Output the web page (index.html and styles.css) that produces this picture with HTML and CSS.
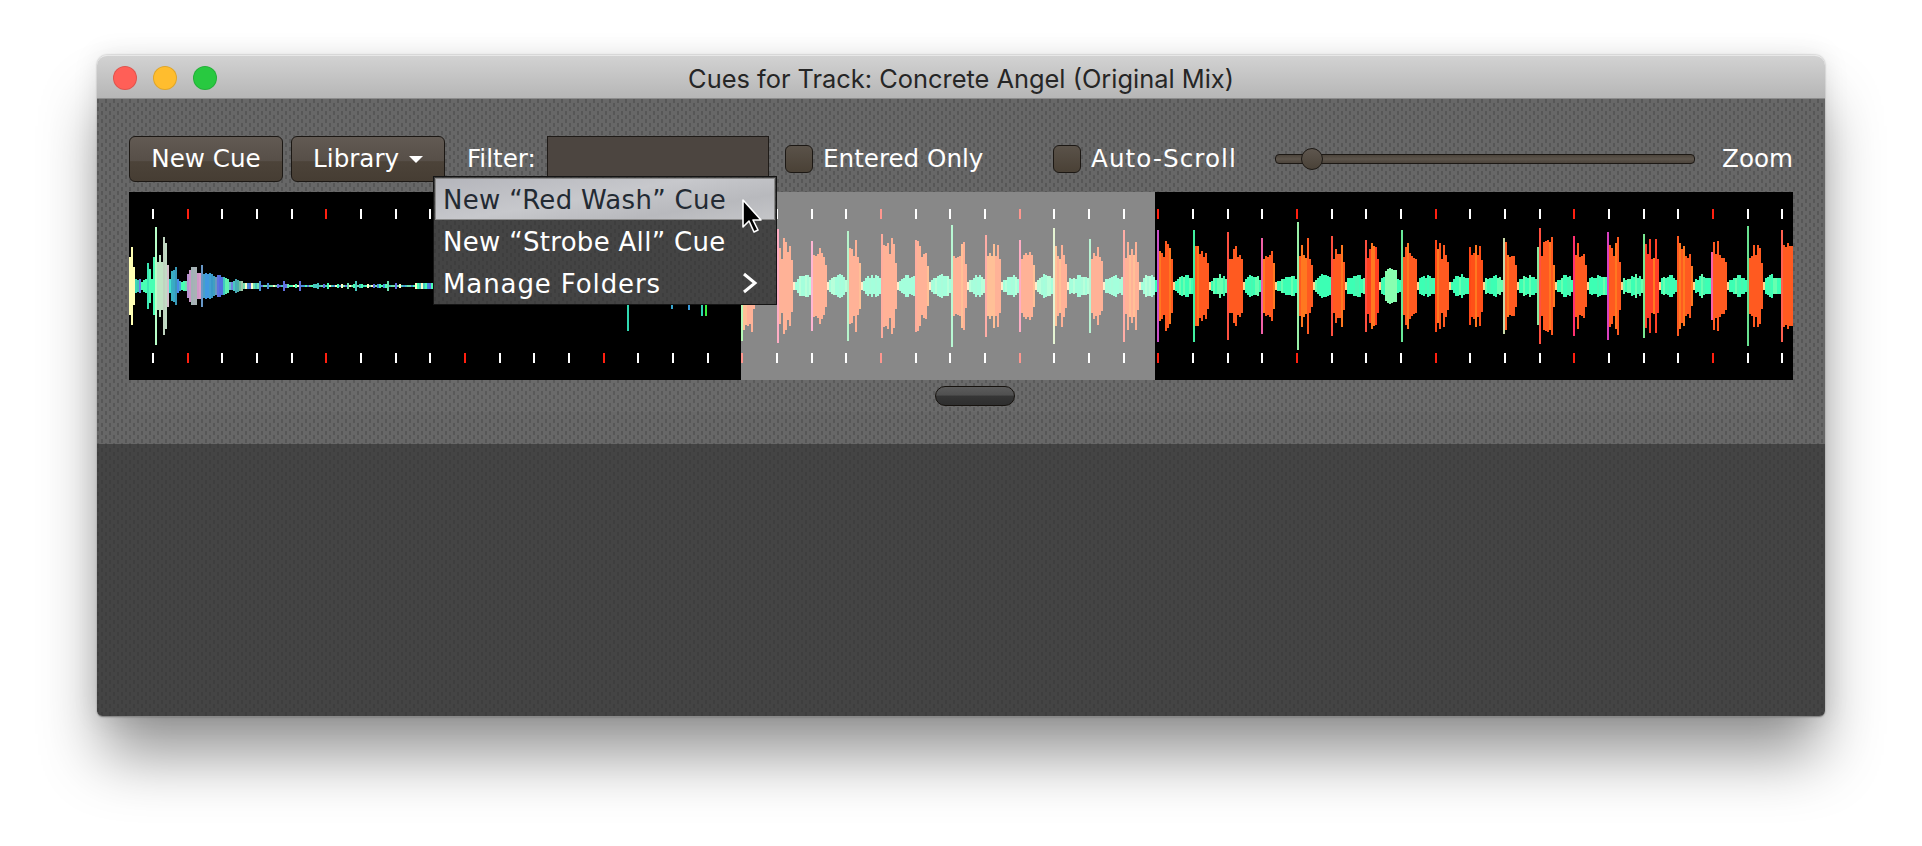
FILE: index.html
```html
<!doctype html>
<html lang="en">
  <head>
    <meta charset="UTF-8" />
    <meta name="viewport" content="width=device-width, initial-scale=1.0" />
    <title>Cues for Track: Concrete Angel (Original Mix)</title>
    <link rel="stylesheet" href="styles.css">
  </head>
  <body>
    <div class="window">
      <header class="titlebar">
        <div class="lights">
          <span class="light light-close"></span>
          <span class="light light-min"></span>
          <span class="light light-max"></span>
        </div>
        <h1 class="title">Cues for Track: Concrete Angel (Original Mix)</h1>
      </header>

      <section class="panel">
        <div class="toolbar">
          <button class="btn btn-new" type="button">New Cue</button>
          <button class="btn btn-library" type="button">Library <span class="caret"></span></button>
          <label class="filter-label" for="filter">Filter:</label>
          <input class="filter-input" id="filter" type="text" />
          <label class="check check-entered"><span class="box"></span>Entered Only</label>
          <label class="check check-scroll"><span class="box"></span>Auto-Scroll</label>
          <div class="slider"><span class="thumb"></span></div>
          <span class="zoom-label">Zoom</span>
        </div>

        <div class="wave">
          <canvas id="waveCanvas" width="1664" height="188"></canvas>
          <div class="selection"></div>
        </div>

        <div class="scroller"><span class="scroller-thumb"></span></div>

        <ul class="menu">
          <li class="menu-item menu-item-active">New “Red Wash” Cue</li>
          <li class="menu-item">New “Strobe All” Cue</li>
          <li class="menu-item menu-item-folders">
            Manage Folders
            <svg class="chevron" width="16" height="22" viewBox="0 0 16 22">
              <path d="M2 2 L13 11 L2 20" fill="none" stroke="#fff" stroke-width="3" />
            </svg>
          </li>
        </ul>

        <svg class="pointer" width="22" height="36" viewBox="0 0 22 36">
          <path d="M2 2 L2 29 L8 23 L13 34 L17 32 L12 22 L20 22 Z" fill="#000" stroke="#fff" stroke-width="1.6" stroke-linejoin="round" />
        </svg>
      </section>

      <section class="lower"></section>
    </div>
    <script src="waveform.js"></script>
  </body>
</html>
```

FILE: styles.css
```css
* {
  box-sizing: border-box;
}

html,
body {
  height: 100%;
}

body {
  margin: 0;
  padding: 55px 0 0 97px;
  background-color: #fff;
  font-family: "DejaVu Sans", sans-serif;
}

.window {
  width: 1728px;
  height: 662px;
  border-radius: 10px 10px 6px 6px;
  box-shadow: 0 44px 62px -6px rgba(0, 0, 0, 0.42), 0 0 26px rgba(0, 0, 0, 0.1), 0 0 2px rgba(0, 0, 0, 0.35);
  display: flex;
  flex-direction: column;
}

/* Title bar */
.titlebar {
  height: 44px;
  flex: none;
  display: flex;
  align-items: center;
  justify-content: center;
  position: relative;
  border-radius: 10px 10px 0 0;
  border-top: 1px solid #e8e8e8;
  border-bottom: 1px solid #8c8c8c;
  background: linear-gradient(#d2d2d2, #b6b6b6);
}

.lights {
  position: absolute;
  left: 16px;
  top: 10px;
  display: flex;
  gap: 16px;
}

.light {
  width: 24px;
  height: 24px;
  border-radius: 50%;
  border: 1px solid rgba(0, 0, 0, 0.12);
}

.light-close {
  background-color: #ff5f57;
}

.light-min {
  background-color: #ffbd2e;
}

.light-max {
  background-color: #28c940;
}

.title {
  margin: 2px 0 0;
  font-family: Inter, sans-serif;
  font-size: 25.4px;
  font-weight: 400;
  color: #262626;
}

/* Dotted panel */
.panel {
  height: 345px;
  flex: none;
  position: relative;
  padding: 37px 32px 0;
  background-color: #676767;
  background-image:
    conic-gradient(from 90deg at 2px 4px, transparent 50%, #575757 0 75%, transparent 0),
    conic-gradient(from 90deg at 2px 4px, transparent 50%, #575757 0 75%, transparent 0);
  background-size: 8px 8px;
  background-position: 0 0, 4px 4px;
}

.lower {
  flex: 1;
  border-radius: 0 0 6px 6px;
  border-bottom: 1px solid #888;
  background-color: #444;
  background-image:
    conic-gradient(from 90deg at 2px 4px, transparent 50%, #3e3e3e 0 75%, transparent 0),
    conic-gradient(from 90deg at 2px 4px, transparent 50%, #3e3e3e 0 75%, transparent 0);
  background-size: 8px 8px;
  background-position: 0 0, 4px 4px;
}

/* Toolbar */
.toolbar {
  height: 46px;
  display: flex;
  align-items: center;
  color: #fff;
  font-size: 24.6px;
}

.btn {
  width: 154px;
  height: 46px;
  padding: 0 0 2px;
  border: 1px solid #1c1814;
  border-radius: 6px;
  color: #fff;
  font-family: inherit;
  font-size: 24.6px;
  background: linear-gradient(#625a53, #574f48 54%, #4c4339 56%, #463d33);
}

.btn-library {
  margin-left: 8px;
}

.caret {
  display: inline-block;
  margin-left: 2px;
  vertical-align: middle;
  border-left: 7px solid transparent;
  border-right: 7px solid transparent;
  border-top: 7px solid #fff;
}

.filter-label {
  margin-left: 22px;
  width: 80px;
  flex: none;
  padding-bottom: 2px;
  white-space: nowrap;
}

.filter-input {
  width: 222px;
  height: 46px;
  flex: none;
  padding: 0;
  border: 1px solid #1f1b18;
  background-color: #4c4540;
}

.check {
  display: flex;
  align-items: center;
  gap: 10px;
  flex: none;
  padding-bottom: 2px;
  white-space: nowrap;
}

.check-entered {
  width: 198px;
  margin-left: 16px;
}

.check-scroll {
  width: 182px;
  margin-left: 70px;
  letter-spacing: 1.1px;
}

.box {
  width: 28px;
  height: 28px;
  flex: none;
  margin-top: 2px;
  border: 1px solid #1c1814;
  border-radius: 6px;
  background: linear-gradient(#5a5249, #4a4136);
}

.slider {
  width: 420px;
  height: 10px;
  flex: none;
  margin-left: 40px;
  position: relative;
  border: 1px solid #1c1814;
  border-radius: 4px;
  background: linear-gradient(#4c443b, #5d554c 50%, #4c443b);
}

.thumb {
  position: absolute;
  left: 25px;
  top: -7px;
  width: 22px;
  height: 22px;
  border: 1px solid #1c1814;
  border-radius: 50%;
  background: linear-gradient(#5e564e, #4a4238);
}

.zoom-label {
  margin-left: auto;
  padding-bottom: 2px;
}

/* Waveform */
.wave {
  margin-top: 10px;
  height: 188px;
  position: relative;
  background-color: #000;
}

.wave canvas {
  display: block;
}

.selection {
  position: absolute;
  left: 612px;
  top: 0;
  width: 414px;
  height: 188px;
  background-color: rgba(255, 255, 255, 0.533);
}

.scroller {
  height: 32px;
  display: flex;
  padding: 6px 0 0 806px;
  background-color: rgba(255, 255, 255, 0.025);
}

.scroller-thumb {
  width: 80px;
  height: 20px;
  border: 1px solid #17130f;
  border-radius: 10px;
  background: linear-gradient(#5c5c5c, #505050 45%, #363636 50%, #2e2e2e);
}

/* Popup menu */
.menu {
  position: absolute;
  left: 336px;
  top: 77px;
  width: 344px;
  height: 129px;
  margin: 0;
  padding: 1px;
  list-style: none;
  border: 1px solid #141414;
  color: #fff;
  font-size: 26px;
  letter-spacing: 0.3px;
  background-color: #444;
  background-image:
    conic-gradient(from 90deg at 2px 4px, transparent 50%, #3e3e3e 0 75%, transparent 0),
    conic-gradient(from 90deg at 2px 4px, transparent 50%, #3e3e3e 0 75%, transparent 0);
  background-size: 8px 8px;
  background-position: 0 0, 4px 4px;
}

.menu-item {
  height: 42px;
  padding: 2px 0 0 8px;
  display: flex;
  align-items: center;
  position: relative;
  white-space: nowrap;
}

.menu-item-active {
  color: #232a33;
  border: 1px solid #8a8a8a;
  padding-left: 7px;
  background: linear-gradient(170deg, #b4b5bb, #c7c8cc 45%, #b8b9bd 75%, #c4c5c8);
}

.menu-item-folders {
  letter-spacing: 0.9px;
}

.chevron {
  position: absolute;
  right: 17px;
  top: 10px;
}

.pointer {
  position: absolute;
  left: 644px;
  top: 99px;
}
```

FILE: waveform.js
```js
// Draws the track waveform and beat ticks onto the canvas
const canvas = document.getElementById('waveCanvas');
const ctx = canvas.getContext('2d');

const LEFT = 129; // canvas x = page x - LEFT
const MID = 94;

let seed = 17;
function rand() {
  seed = (seed * 16807) % 2147483647;
  return (seed % 1000) / 1000;
}

function pick(list) {
  return list[Math.floor(rand() * list.length)];
}

function bar(x, half, color, width = 2) {
  ctx.fillStyle = color;
  ctx.fillRect(x - LEFT, MID - half, width, half * 2);
}

// The opening hit, read off bar by bar: [x, half height, colour]
const intro = [
  [129, 29, '#ffffb4'], [131, 39, '#ffffb4'], [133, 19, '#ffffb4'],
  [135, 7, '#3dd8b4'], [137, 6, '#3dc8b4'], [139, 7, '#6a80e8'],
  [141, 4, '#48ffb4'], [143, 6, '#48ffb4'], [145, 7, '#48ffb4'],
  [147, 23, '#3ce8b4'], [149, 17, '#48ffb4'], [151, 7, '#48ffb4'],
  [153, 29, '#48ffb4'], [155, 59, '#b8ffc8'], [157, 24, '#c0e4c4'],
  [159, 31, '#c0e4c4'], [161, 24, '#c0e4c4'], [163, 49, '#c0d4c0'],
  [165, 43, '#c0dcc4'], [167, 21, '#d4c0cc'], [169, 7, '#40e0d0'],
  [171, 15, '#38b0c0'], [173, 16, '#38a8c8'], [175, 19, '#3898b8'],
  [177, 7, '#4888e8'], [179, 5, '#48a8d8'], [181, 4, '#48ffb4'],
  [183, 5, '#48ffb4'], [185, 5, '#70e0b0'], [187, 12, '#b890d0'],
  [189, 16, '#c898c8'], [191, 19, '#a0b4b4'], [193, 19, '#a8b0b8'],
  [195, 19, '#a8b4b4'], [197, 13, '#d098c8'], [199, 13, '#d8a0c8'],
  [201, 21, '#6898c8'], [203, 12, '#48a0c8'], [205, 13, '#4098e0'],
  [207, 12, '#4098e0'], [209, 13, '#40a0d0'], [211, 12, '#3898c8'],
  [213, 10, '#40a0c0'], [215, 9, '#6898c0'], [217, 11, '#6070e0'],
  [219, 11, '#5070e0'], [221, 9, '#5070e0'], [223, 9, '#40c8c0'],
  [225, 8, '#60f0b0'], [227, 7, '#60f0b0'], [229, 4, '#60c0d0'],
  [231, 4, '#7080e0'], [233, 5, '#48c8c0'], [235, 7, '#48a8b8'],
  [237, 6, '#48b0a8'], [239, 5, '#70c0a0'], [241, 5, '#a0c8a8']
];
intro.forEach(([x, half, color]) => bar(x, half, color));

// Long quiet stretch with a few small bumps
const bumps = { 259: 5, 267: 3, 283: 5, 294: 3, 299: 5, 317: 3, 327: 3, 347: 3, 355: 5, 387: 5, 395: 3 };
const quiet = ['#48ffb4', '#48c8c0', '#4890d8', '#6070e0', '#70e0b0', '#ffffc8'];
for (let x = 243; x < 741; x += 2) {
  let half = x < 259 ? 3 : rand() < 0.3 ? 2 : 1;
  if (bumps[x]) half = bumps[x];
  if (x > 413 && x < 433) half = 3;
  bar(x, half, pick(quiet));
}

// The few tall bars that show below the menu
[
  [627, 45, '#30d8b0'], [659, 10, '#3090d8'], [661, 15, '#3090d8'],
  [671, 23, '#38a8d0'], [688, 24, '#3898d8'], [701, 30, '#30d8b0'],
  [705, 30, '#38f040']
].forEach(([x, half, color]) => bar(x, half, color));

// Kick pattern: [x, spike half height, spike colour, body colour]
const ORANGE = '#ff5a20';
const beats = [
  [741, 55, '#60f060', ORANGE], [777, 57, '#ff5080', ORANGE], [811, 45, '#ff60a0', ORANGE],
  [847, 55, '#60e890', ORANGE], [881, 52, '#ff5030', ORANGE], [915, 46, '#ff5030', ORANGE],
  [951, 61, '#68f0a0', ORANGE], [985, 51, '#ff5040', ORANGE], [1019, 46, '#ff5080', ORANGE],
  [1053, 58, '#c8e8a0', ORANGE], [1089, 47, '#68e8a0', ORANGE], [1123, 56, '#ff5040', ORANGE],
  [1157, 56, '#c850c8', ORANGE], [1193, 56, '#40f0a0', ORANGE], [1227, 54, '#ff5040', ORANGE],
  [1261, 48, '#f060a8', ORANGE], [1297, 64, '#98f0a8', ORANGE], [1331, 50, '#ff5040', ORANGE],
  [1365, 46, '#ff5040', '#ff4020'], [1401, 56, '#68e898', ORANGE], [1435, 46, '#ff4818', ORANGE],
  [1469, 39, '#ff4818', '#ff5018'], [1503, 48, '#c8d8a8', ORANGE], [1539, 58, '#ff5040', ORANGE],
  [1573, 50, '#ff3070', ORANGE], [1607, 54, '#d840c0', ORANGE], [1643, 52, '#78e890', '#ff4028'],
  [1677, 50, '#ff5a20', ORANGE], [1711, 34, '#f860a8', ORANGE], [1747, 60, '#68e090', ORANGE],
  [1781, 56, '#ff6050', ORANGE]
];

const GREEN = ['#3cffb4', '#3cffb4', '#3cffb4', '#48f8b0', '#68ffb0'];

beats.forEach(([x, spike, spikeColor, bodyColor], i) => {
  const next = beats[i + 1] ? beats[i + 1][0] : 1793;
  const bodyBars = 6 + Math.floor(rand() * 2);
  for (let b = 0; b < bodyBars; b++) {
    let half = 27 + Math.floor(rand() * 7);
    if (rand() < 0.45) half += 7 + Math.floor(rand() * 10);
    if (b === bodyBars - 1) half = 20 + Math.floor(rand() * 8);
    const color = rand() < 0.2 ? '#ff7820' : bodyColor;
    bar(x + 2 + b * 2, half, color);
  }
  let bx = x + 2 + bodyBars * 2;
  bar(bx, 4, '#ffd890');
  bx += 2;
  // low green section, spiky and small
  const span = next - bx;
  for (let g = bx; g < next; g += 2) {
    const t = (g - bx) / span;
    const half = 4 + Math.round(Math.sin(t * Math.PI) * 4 + rand() * 4);
    bar(g, half, pick(GREEN));
  }
  bar(x, spike, spikeColor);
});

// Extra pale bars picked out of the right-hand side
[
  [1385, 15, '#88ffb0'], [1387, 17, '#88ffb0'], [1389, 18, '#88ffb0'],
  [1391, 17, '#88ffb0'], [1393, 16, '#88ffb0'], [1395, 16, '#88ffb0'],
  [1537, 39, '#88e8a0'], [1713, 44, '#ff5a20']
].forEach(([x, half, color]) => bar(x, half, color));

// Beat ticks, every fourth is red
for (let i = 0; i < 48; i++) {
  const x = Math.round(153 + i * 34.67) - LEFT;
  ctx.fillStyle = i % 4 === 1 ? '#ff2010' : '#fff';
  ctx.fillRect(x - 1, 17, 2, 10);
  ctx.fillRect(x - 1, 161, 2, 10);
}
```
